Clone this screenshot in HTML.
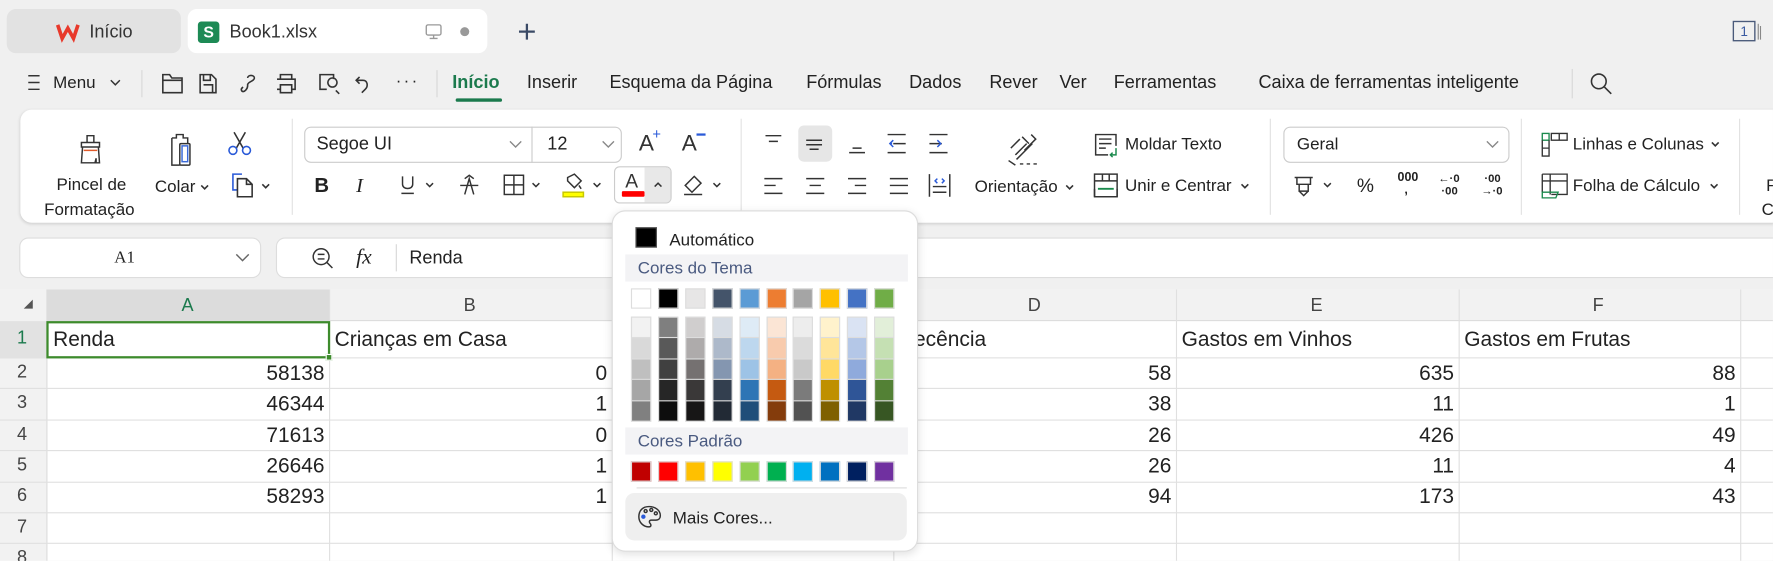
<!DOCTYPE html>
<html><head><meta charset="utf-8">
<style>
*{box-sizing:border-box;margin:0;padding:0}
html,body{width:1773px;height:561px;overflow:hidden;background:#f0f0f0}
#s{position:absolute;left:0;top:0;width:1568px;height:496px;transform:scale(1.1307);transform-origin:0 0;font-family:"Liberation Sans",sans-serif;color:#222;background:#f0f0f0;overflow:hidden}
.a{position:absolute}
.t{position:absolute;font-size:15px;white-space:nowrap;line-height:1}
svg.a{overflow:visible}
.sep{position:absolute;width:1px;background:#d8d8d8}
.cell{position:absolute;font-size:18.5px;line-height:1;white-space:nowrap}
.sw{position:absolute;width:18px;height:18px;border:1px solid #ddd}
</style></head><body><div id="s">
<div class="a" style="left:6px;top:8px;width:154px;height:39px;background:#e2e2e2;border-radius:8px"></div>
<svg class="a" style="left:50px;top:20px" width="20" height="16" viewBox="0 0 20 16"><path d="M1 2 L5 14 L10 5 L15 14 L19 2" fill="none" stroke="#e8392b" stroke-width="3.2" stroke-linejoin="miter"/></svg>
<div class="t" style="left:79px;top:21px;font-size:16px;color:#333">Início</div>
<div class="a" style="left:166px;top:8px;width:265px;height:39px;background:#fff;border-radius:8px"></div>
<div class="a" style="left:175px;top:19px;width:19px;height:19px;background:#1d8a55;border-radius:3px;color:#fff;font-size:14px;font-weight:bold;text-align:center;line-height:19px">S</div>
<div class="t" style="left:203px;top:21px;font-size:16px;color:#333">Book1.xlsx</div>
<svg class="a" style="left:376px;top:21px" width="15" height="14"><rect x="1" y="1" width="13" height="9" rx="1.5" fill="none" stroke="#999" stroke-width="1.2"/><path d="M7.5 10v3M4 13h7" stroke="#999" stroke-width="1.2"/></svg>
<div class="a" style="left:407px;top:24px;width:8px;height:8px;border-radius:50%;background:#999"></div>
<svg class="a" style="left:458px;top:20px" width="16" height="16"><path d="M8 1v14M1 8h14" stroke="#3a4a66" stroke-width="2"/></svg>
<svg class="a" style="left:1532px;top:18px" width="26" height="19"><rect x="1" y="1" width="19" height="17" fill="none" stroke="#4a5a7a" stroke-width="1.2"/><text x="10.5" y="14" font-size="12" text-anchor="middle" fill="#3a5aa0" font-family="Liberation Sans">1</text><path d="M23 3v14M25 5v12" stroke="#888" stroke-width="1"/></svg>
<svg class="a" style="left:24px;top:66px" width="12" height="14"><path d="M1 1h10M1 7h10M1 13h10" stroke="#333" stroke-width="1.3"/></svg>
<div class="t" style="left:47px;top:66px;font-size:15px">Menu</div>
<svg class="a" style="left:97px;top:70px" width="10" height="6"><path d="M1 1l4 4 4-4" fill="none" stroke="#333" stroke-width="1.3"/></svg>
<div class="sep" style="left:125px;top:62px;height:24px"></div>
<svg class="a" style="left:142px;top:63px" width="230" height="22" fill="none" stroke="#333" stroke-width="1.4">
<path d="M2 3h6l2 3h9v13H2z M2 8h17"/>
<path d="M35 3h10l4 4v12H35z M38 3v5h6V3 M38 12h8v7"/>
<path d="M77 6c0-3 6-3 6 0s-6 3-6 6v1 M77 13c0 3-3 5-4 5s-3-2 0-4"/>
<path d="M106 7V3h10v4 M103 7h16v9h-3 M106 16h-3 M106 12h10v7h-10z"/>
<path d="M147 16h-6V3h12v4 M152 14a4 4 0 1 1 0.01 0 M155 17l3 3"/>
<path d="M176 5l-3 3 3 3 M173 8h6c4 0 5 5 2 8l-3 3"/>
</svg>
<div class="t" style="left:350px;top:64px;font-size:15px;letter-spacing:2px">···</div>
<div class="sep" style="left:386px;top:62px;height:24px"></div>
<div class="t" style="left:400px;top:66px;font-size:16px;font-weight:bold;color:#1b7a4d">Início</div>
<div class="a" style="left:403px;top:87px;width:41px;height:3px;border-radius:2px;background:#1b7a4d"></div>
<div class="t" style="left:466px;top:66px;font-size:16px">Inserir</div>
<div class="t" style="left:539px;top:66px;font-size:16px">Esquema da Página</div>
<div class="t" style="left:713px;top:66px;font-size:16px">Fórmulas</div>
<div class="t" style="left:804px;top:66px;font-size:16px">Dados</div>
<div class="t" style="left:875px;top:66px;font-size:16px">Rever</div>
<div class="t" style="left:937px;top:66px;font-size:16px">Ver</div>
<div class="t" style="left:985px;top:66px;font-size:16px">Ferramentas</div>
<div class="t" style="left:1113px;top:66px;font-size:16px">Caixa de ferramentas inteligente</div>
<div class="sep" style="left:1390px;top:61px;height:26px"></div>
<svg class="a" style="left:1405px;top:63px" width="22" height="22"><circle cx="9" cy="9" r="6.5" fill="none" stroke="#333" stroke-width="1.4"/><path d="M14 14l6 6" stroke="#333" stroke-width="1.4"/></svg>
<div class="a" style="left:18px;top:97px;width:1580px;height:100px;background:#fff;border-radius:10px;box-shadow:0 1px 3px rgba(0,0,0,.15)"></div>
<svg class="a" style="left:68px;top:118px" width="24" height="28" fill="none" stroke="#333" stroke-width="1.3"><path d="M9 8V2h6v6 M4 8h16v4H4z M5 12l-1 14h12l1-4v4h3l-1-14"/><path d="M6 15h12" stroke="#e05a2a"/></svg>
<div class="t" style="left:50px;top:156px;font-size:15px">Pincel de</div>
<div class="t" style="left:39px;top:178px;font-size:15px">Formatação</div>
<svg class="a" style="left:147px;top:118px" width="30" height="30" fill="none" stroke="#333" stroke-width="1.3"><path d="M5 4h4V1h6v3h4v5 M5 4v24h7"/><rect x="12" y="9" width="9" height="19" rx="1"/><rect x="14" y="11" width="5" height="14" stroke="#3a6ad8"/></svg>
<div class="t" style="left:137px;top:158px;font-size:15px">Colar</div>
<svg class="a" style="left:177px;top:163px" width="8" height="5"><path d="M1 1l3 3 3-3" fill="none" stroke="#333" stroke-width="1.4"/></svg>
<svg class="a" style="left:201px;top:116px" width="22" height="22" fill="none" stroke="#2a5ad8" stroke-width="1.4"><path d="M6 1l8 14 M16 1l-8 14" stroke="#333"/><circle cx="5" cy="17" r="3.5"/><circle cx="17" cy="17" r="3.5"/></svg>
<svg class="a" style="left:204px;top:152px" width="36" height="24" fill="none" stroke-width="1.4"><path d="M6 16H2V2h8" stroke="#2a5ad8"/><path d="M6 6h8l5 5v11H6z M14 6v5h5" stroke="#333"/><path d="M28 11l3 3 3-3" stroke="#333"/></svg>
<div class="sep" style="left:258px;top:105px;height:85px;background:#e2e2e2"></div>
<div class="a" style="left:269px;top:112px;width:281px;height:32px;border:1px solid #ccc;border-radius:6px"></div>
<div class="a" style="left:470px;top:112px;width:1px;height:32px;background:#ccc"></div>
<div class="t" style="left:280px;top:120px;font-size:16px">Segoe UI</div>
<svg class="a" style="left:450px;top:124px" width="12" height="7"><path d="M1 1l5 5 5-5" fill="none" stroke="#888" stroke-width="1.2"/></svg>
<div class="t" style="left:484px;top:120px;font-size:16px">12</div>
<svg class="a" style="left:532px;top:124px" width="12" height="7"><path d="M1 1l5 5 5-5" fill="none" stroke="#888" stroke-width="1.2"/></svg>
<div class="t" style="left:565px;top:117px;font-size:20px;color:#333">A</div>
<div class="t" style="left:577px;top:112px;font-size:13px;color:#2a5ad8">+</div>
<div class="t" style="left:603px;top:117px;font-size:20px;color:#333">A</div>
<div class="a" style="left:616px;top:118px;width:8px;height:1.5px;background:#2a5ad8"></div>
<div class="t" style="left:278px;top:155px;font-size:18px;font-weight:bold">B</div>
<div class="t" style="left:315px;top:155px;font-size:18px;font-style:italic;font-family:'Liberation Serif',serif">I</div>
<svg class="a" style="left:354px;top:154px" width="30" height="20" fill="none" stroke="#333" stroke-width="1.3"><path d="M2 2v7c0 5 9 5 9 0V2 M1 17h11 M23 8l3 3 3-3"/></svg>
<svg class="a" style="left:406px;top:154px" width="18" height="20" fill="none" stroke="#333" stroke-width="1.3"><path d="M5 4l4-3 4 3 M1 10h16 M5 18l4-14 4 14"/></svg>
<svg class="a" style="left:445px;top:154px" width="40" height="20" fill="none" stroke="#333" stroke-width="1.3"><rect x="1" y="1" width="17" height="17"/><path d="M9.5 1v17M1 9.5h17 M26 8l3 3 3-3"/></svg>
<svg class="a" style="left:497px;top:152px" width="40" height="24" fill="none" stroke="#333" stroke-width="1.3"><path d="M5 5l6-3 6 6-6 6-6-6z M15 12l2 3"/><rect x="1" y="18" width="18" height="4" fill="#ffff00" stroke="#c8c800"/><path d="M28 10l3 3 3-3"/></svg>
<div class="a" style="left:543px;top:147px;width:51px;height:33px;border:1px solid #ccc;border-radius:5px"></div>
<div class="a" style="left:570px;top:148px;width:23px;height:31px;background:#e8e8e8;border-radius:0 4px 4px 0"></div>
<div class="t" style="left:553px;top:152px;font-size:17px;color:#333">A</div>
<div class="a" style="left:550px;top:169px;width:20px;height:5px;background:#f00;border-radius:1px"></div>
<svg class="a" style="left:578px;top:161px" width="8" height="5"><path d="M1 4l3-3 3 3" fill="none" stroke="#333" stroke-width="1.3"/></svg>
<svg class="a" style="left:603px;top:152px" width="36" height="24" fill="none" stroke="#333" stroke-width="1.3"><path d="M3 12l8-8 6 6-8 8z M2 20h16"/><path d="M28 10l3 3 3-3"/></svg>
<div class="sep" style="left:655px;top:105px;height:85px;background:#e2e2e2"></div>
<div class="a" style="left:706px;top:111px;width:30px;height:32px;background:#e6e6e6;border-radius:5px"></div>
<svg class="a" style="left:672px;top:116px" width="175" height="62" fill="none" stroke="#333" stroke-width="1.3">
<path d="M5 4h14 M8 9h8"/>
<path d="M41 8h14 M41 12h14 M44 16h8"/>
<path d="M79 19h14 M82 15h8"/>
<path d="M113 3h16 M113 19h16 M118 11h11" /><path d="M118 8l-3 3 3 3" stroke="#2a5ad8"/><path d="M115 11h2" stroke="#2a5ad8"/>
<path d="M150 3h16 M150 19h16 M150 11h11"/><path d="M157 8l3 3-3 3" stroke="#2a5ad8"/>
<path d="M4 42h16 M4 48h10 M4 55h16"/>
<path d="M41 42h16 M44 48h10 M41 55h16"/>
<path d="M78 42h16 M84 48h10 M78 55h16"/>
<path d="M115 42h16 M115 48h16 M115 55h16"/>
<path d="M150 38v20 M168 38v20 M153 49h12 M153 54h12"/><path d="M157 42l-2 2 2 2 M161 42l2 2-2 2" stroke="#2a5ad8"/>
</svg>
<svg class="a" style="left:890px;top:117px" width="34" height="30" fill="none" stroke="#333" stroke-width="1.3"><path d="M4 14l8-8 M8 20l10-10 M14 4l6 6 M22 2l4 4-10 10 M9 24l14-14 M2 25l6 4 M12 28h3 M18 28h3 M24 28h3"/></svg>
<div class="t" style="left:862px;top:158px;font-size:15px">Orientação</div>
<svg class="a" style="left:942px;top:163px" width="8" height="5"><path d="M1 1l3 3 3-3" fill="none" stroke="#333" stroke-width="1.4"/></svg>
<svg class="a" style="left:967px;top:117px" width="22" height="22" fill="none" stroke="#333" stroke-width="1.3"><path d="M13 20H2V2h18v10 M5 6h11 M5 10h11 M5 14h6"/><path d="M20 14v6h-4 M17 18l-2 2 2 2" stroke="#1b8a4d"/></svg>
<div class="t" style="left:995px;top:120px;font-size:15px">Moldar Texto</div>
<svg class="a" style="left:967px;top:153px" width="22" height="22" fill="none" stroke="#333" stroke-width="1.3"><rect x="1" y="1" width="20" height="20"/><path d="M1 7h20 M8 1v6 M14 1v6 M1 21V14 M21 14v7"/><path d="M4 14h14" stroke="#1b8a4d" stroke-width="1.6"/></svg>
<div class="t" style="left:995px;top:157px;font-size:15px">Unir e Centrar</div>
<svg class="a" style="left:1097px;top:162px" width="8" height="5"><path d="M1 1l3 3 3-3" fill="none" stroke="#333" stroke-width="1.4"/></svg>
<div class="sep" style="left:1123px;top:105px;height:85px;background:#e2e2e2"></div>
<div class="a" style="left:1135px;top:112px;width:200px;height:32px;border:1px solid #ccc;border-radius:6px"></div>
<div class="t" style="left:1147px;top:120px;font-size:15px">Geral</div>
<svg class="a" style="left:1314px;top:124px" width="12" height="7"><path d="M1 1l5 5 5-5" fill="none" stroke="#888" stroke-width="1.2"/></svg>
<svg class="a" style="left:1143px;top:153px" width="38" height="22" fill="none" stroke="#333" stroke-width="1.3"><path d="M2 4h16 M4 4v6h12V4 M6 10v6h8v-6 M6 16l4 4 4-4"/><path d="M28 9l3 3 3-3"/></svg>
<div class="t" style="left:1200px;top:156px;font-size:17px">%</div>
<div class="t" style="left:1236px;top:152px;font-size:11px;font-weight:bold">000<br><span style="margin-left:6px">,</span></div>
<div class="t" style="left:1272px;top:153px;font-size:10px;font-weight:bold;line-height:11px">←·0<br>&nbsp;·00</div>
<div class="t" style="left:1310px;top:153px;font-size:10px;font-weight:bold;line-height:11px">&nbsp;·00<br>→·0</div>
<div class="sep" style="left:1345px;top:105px;height:85px;background:#e2e2e2"></div>
<svg class="a" style="left:1363px;top:117px" width="24" height="24" fill="none" stroke-width="1.2"><rect x="1" y="1" width="6" height="6" stroke="#1b8a4d"/><path d="M1 7v14h6V7 M1 14h6 M9 1h14v6H9z M16 1v6" stroke="#333"/></svg>
<div class="t" style="left:1391px;top:120px;font-size:15px">Linhas e Colunas</div>
<svg class="a" style="left:1513px;top:125px" width="8" height="5"><path d="M1 1l3 3 3-3" fill="none" stroke="#333" stroke-width="1.4"/></svg>
<svg class="a" style="left:1363px;top:153px" width="24" height="24" fill="none" stroke-width="1.2"><path d="M1 1h22v18H9 M1 1v16 M1 7h22 M8 1v18" stroke="#333"/><path d="M1 17v5h12l2-5z" stroke="#1b8a4d"/></svg>
<div class="t" style="left:1391px;top:157px;font-size:15px">Folha de Cálculo</div>
<svg class="a" style="left:1512px;top:162px" width="8" height="5"><path d="M1 1l3 3 3-3" fill="none" stroke="#333" stroke-width="1.4"/></svg>
<div class="sep" style="left:1538px;top:105px;height:85px;background:#e2e2e2"></div>
<div class="t" style="left:1562px;top:157px;font-size:15px">F</div>
<div class="t" style="left:1558px;top:178px;font-size:15px">C</div>
<div class="a" style="left:17px;top:210px;width:214px;height:36px;background:#fff;border:1px solid #ddd;border-radius:8px"></div>
<div class="t" style="left:101px;top:221px;font-size:15px;font-family:'Liberation Serif',serif">A1</div>
<svg class="a" style="left:208px;top:224px" width="13" height="8"><path d="M1 1l5.5 5.5L12 1" fill="none" stroke="#666" stroke-width="1.3"/></svg>
<div class="a" style="left:244px;top:210px;width:1340px;height:36px;background:#fff;border:1px solid #ddd;border-radius:8px"></div>
<svg class="a" style="left:275px;top:218px" width="22" height="22" fill="none" stroke="#333" stroke-width="1.3"><circle cx="9" cy="9" r="7"/><path d="M14 14l5 5 M6 7h6 M6 11h6"/></svg>
<div class="t" style="left:315px;top:218px;font-size:19px;font-style:italic;font-family:'Liberation Serif',serif">fx</div>
<div class="sep" style="left:350px;top:216px;height:24px"></div>
<div class="t" style="left:362px;top:221px;font-size:16px">Renda</div>
<div class="a" style="left:0;top:256px;width:1568px;height:240px;background:#fff"></div>
<div class="a" style="left:0;top:256px;width:1568px;height:28px;background:#f2f2f2;border-bottom:1px solid #ddd"></div>
<div class="a" style="left:0;top:256px;width:42px;height:240px;background:#f2f2f2;border-right:1px solid #ddd"></div>
<div class="a" style="left:42px;top:256px;width:249px;height:28px;background:#dcdcdc"></div>
<div class="a" style="left:0;top:284px;width:42px;height:32px;background:#e2e2e2"></div>
<svg class="a" style="left:20px;top:264px" width="10" height="10"><path d="M9 1v8H1z" fill="#555"/></svg>
<div id="g"></div>
<div class="a" style="left:41px;top:284px;width:251px;height:33px;border:2px solid #3d8b2c"></div>
<div class="a" style="left:288px;top:313px;width:6px;height:6px;background:#3d8b2c;border:1px solid #fff"></div>
<div class="a" style="left:541px;top:186px;width:271px;height:302px;background:#fff;border:1px solid #ddd;border-radius:12px;box-shadow:0 2px 8px rgba(0,0,0,.12)"></div>
<div class="a" style="left:562px;top:201px;width:19px;height:18px;background:#000;border:1px solid #555"></div>
<div class="t" style="left:592px;top:205px;font-size:15px">Automático</div>
<div class="a" style="left:553px;top:225px;width:250px;height:24px;background:#f3f3f5"></div>
<div class="t" style="left:564px;top:230px;font-size:15px;color:#4a5a80">Cores do Tema</div>
<div class="a" style="left:553px;top:378px;width:250px;height:24px;background:#f3f3f5"></div>
<div class="t" style="left:564px;top:383px;font-size:15px;color:#4a5a80">Cores Padrão</div>
<div class="a" style="left:563px;top:431px;width:239px;height:1px;background:#ddd"></div>
<div class="a" style="left:553px;top:436px;width:249px;height:42px;background:#efefef;border-radius:8px"></div>
<svg class="a" style="left:563px;top:446px" width="22" height="22" fill="none" stroke="#333" stroke-width="1.3"><path d="M11 2C5 2 2 6 2 11s4 9 9 9c2 0 2-2 1-3s-1-3 1-3h4c3 0 4-2 4-4 0-5-5-8-10-8z"/><circle cx="6" cy="11" r="1.3" fill="#2a5ad8" stroke="#2a5ad8"/><circle cx="8" cy="6" r="1.3"/><circle cx="13" cy="5" r="1.3"/><circle cx="17" cy="8" r="1.3"/></svg>
<div class="t" style="left:595px;top:451px;font-size:15px">Mais Cores...</div>
<div id="p"></div>
</div>
<script>
(function(){
var g='',cols=[42,291,541,790,1040,1290,1539,1800],L='ABCDEFG';
for(var i=0;i<7;i++){var c=(cols[i]+cols[i+1])/2;g+='<div class="t" style="left:'+(c-6)+'px;top:263px;font-size:16px;color:'+(i==0?'#1b7a4d':'#444')+'">'+L[i]+'</div>';if(i>0)g+='<div class="a" style="left:'+cols[i]+'px;top:256px;width:1px;height:240px;background:#e0e0e0"></div>';}
var rows=[284,316,343.4,370.8,398.2,425.6,453,480.4,508];
for(var r=0;r<8;r++){g+='<div class="a" style="left:0;top:'+rows[r+1]+'px;width:1568px;height:1px;background:#e0e0e0"></div>';g+='<div class="t" style="left:15px;top:'+((rows[r]+rows[r+1])/2-8)+'px;font-size:16px;color:'+(r==0?'#1b7a4d':'#444')+'">'+(r+1)+'</div>';}
var d=[["Renda","Crianças em Casa","","Recência","Gastos em Vinhos","Gastos em Frutas"],[58138,0,"",58,635,88],[46344,1,"",38,11,1],[71613,0,"",26,426,49],[26646,1,"",26,11,4],[58293,1,"",94,173,43]];
for(var r=0;r<6;r++)for(var c=0;c<6;c++){var v=d[r][c];if(v==="")continue;var y=(rows[r]+rows[r+1])/2-9;
if(r==0)g+='<div class="cell" style="left:'+(cols[c]+5)+'px;top:'+y+'px">'+v+'</div>';
else g+='<div class="cell" style="right:'+(1568-cols[c+1]+4)+'px;top:'+y+'px">'+v+'</div>';}
document.getElementById('g').innerHTML=g;
var tc=['#ffffff','#000000','#e7e6e6','#44546a','#5b9bd5','#ed7d31','#a5a5a5','#ffc000','#4472c4','#70ad47'];
var sh=[['#f2f2f2','#d9d9d9','#bfbfbf','#a6a6a6','#808080'],['#7f7f7f','#595959','#404040','#262626','#0d0d0d'],['#d0cece','#aeabab','#757171','#3a3838','#171616'],['#d6dce4','#adb9ca','#8496b0','#333f4f','#222a35'],['#deebf6','#bdd7ee','#9dc3e6','#2e75b5','#1f4e79'],['#fbe5d5','#f8cbad','#f4b183','#c55a11','#843c0c'],['#ededed','#dbdbdb','#c9c9c9','#7b7b7b','#525252'],['#fff2cc','#ffe599','#ffd966','#bf9000','#7f6000'],['#dae3f3','#b4c7e7','#8faadc','#2f5597','#203864'],['#e2efd9','#c5e0b3','#a8d08d','#538135','#375623']];
var st=['#c00000','#ff0000','#ffc000','#ffff00','#92d050','#00b050','#00b0f0','#0070c0','#002060','#7030a0'];
var p='';
for(var i=0;i<10;i++){var x=558+i*23.9;
p+='<div class="sw" style="left:'+x+'px;top:255px;background:'+tc[i]+'"></div>';
p+='<div class="a" style="left:'+x+'px;top:280px;width:18px;height:93px;border:1px solid #ddd;background:#ddd"></div>';
for(var k=0;k<5;k++)p+='<div class="a" style="left:'+(x+1)+'px;top:'+(281+k*18.4)+'px;width:16px;height:17.4px;background:'+sh[i][k]+'"></div>';
p+='<div class="sw" style="left:'+x+'px;top:408px;background:'+st[i]+'"></div>';}
document.getElementById('p').innerHTML=p;
})();
</script>
</body></html>
